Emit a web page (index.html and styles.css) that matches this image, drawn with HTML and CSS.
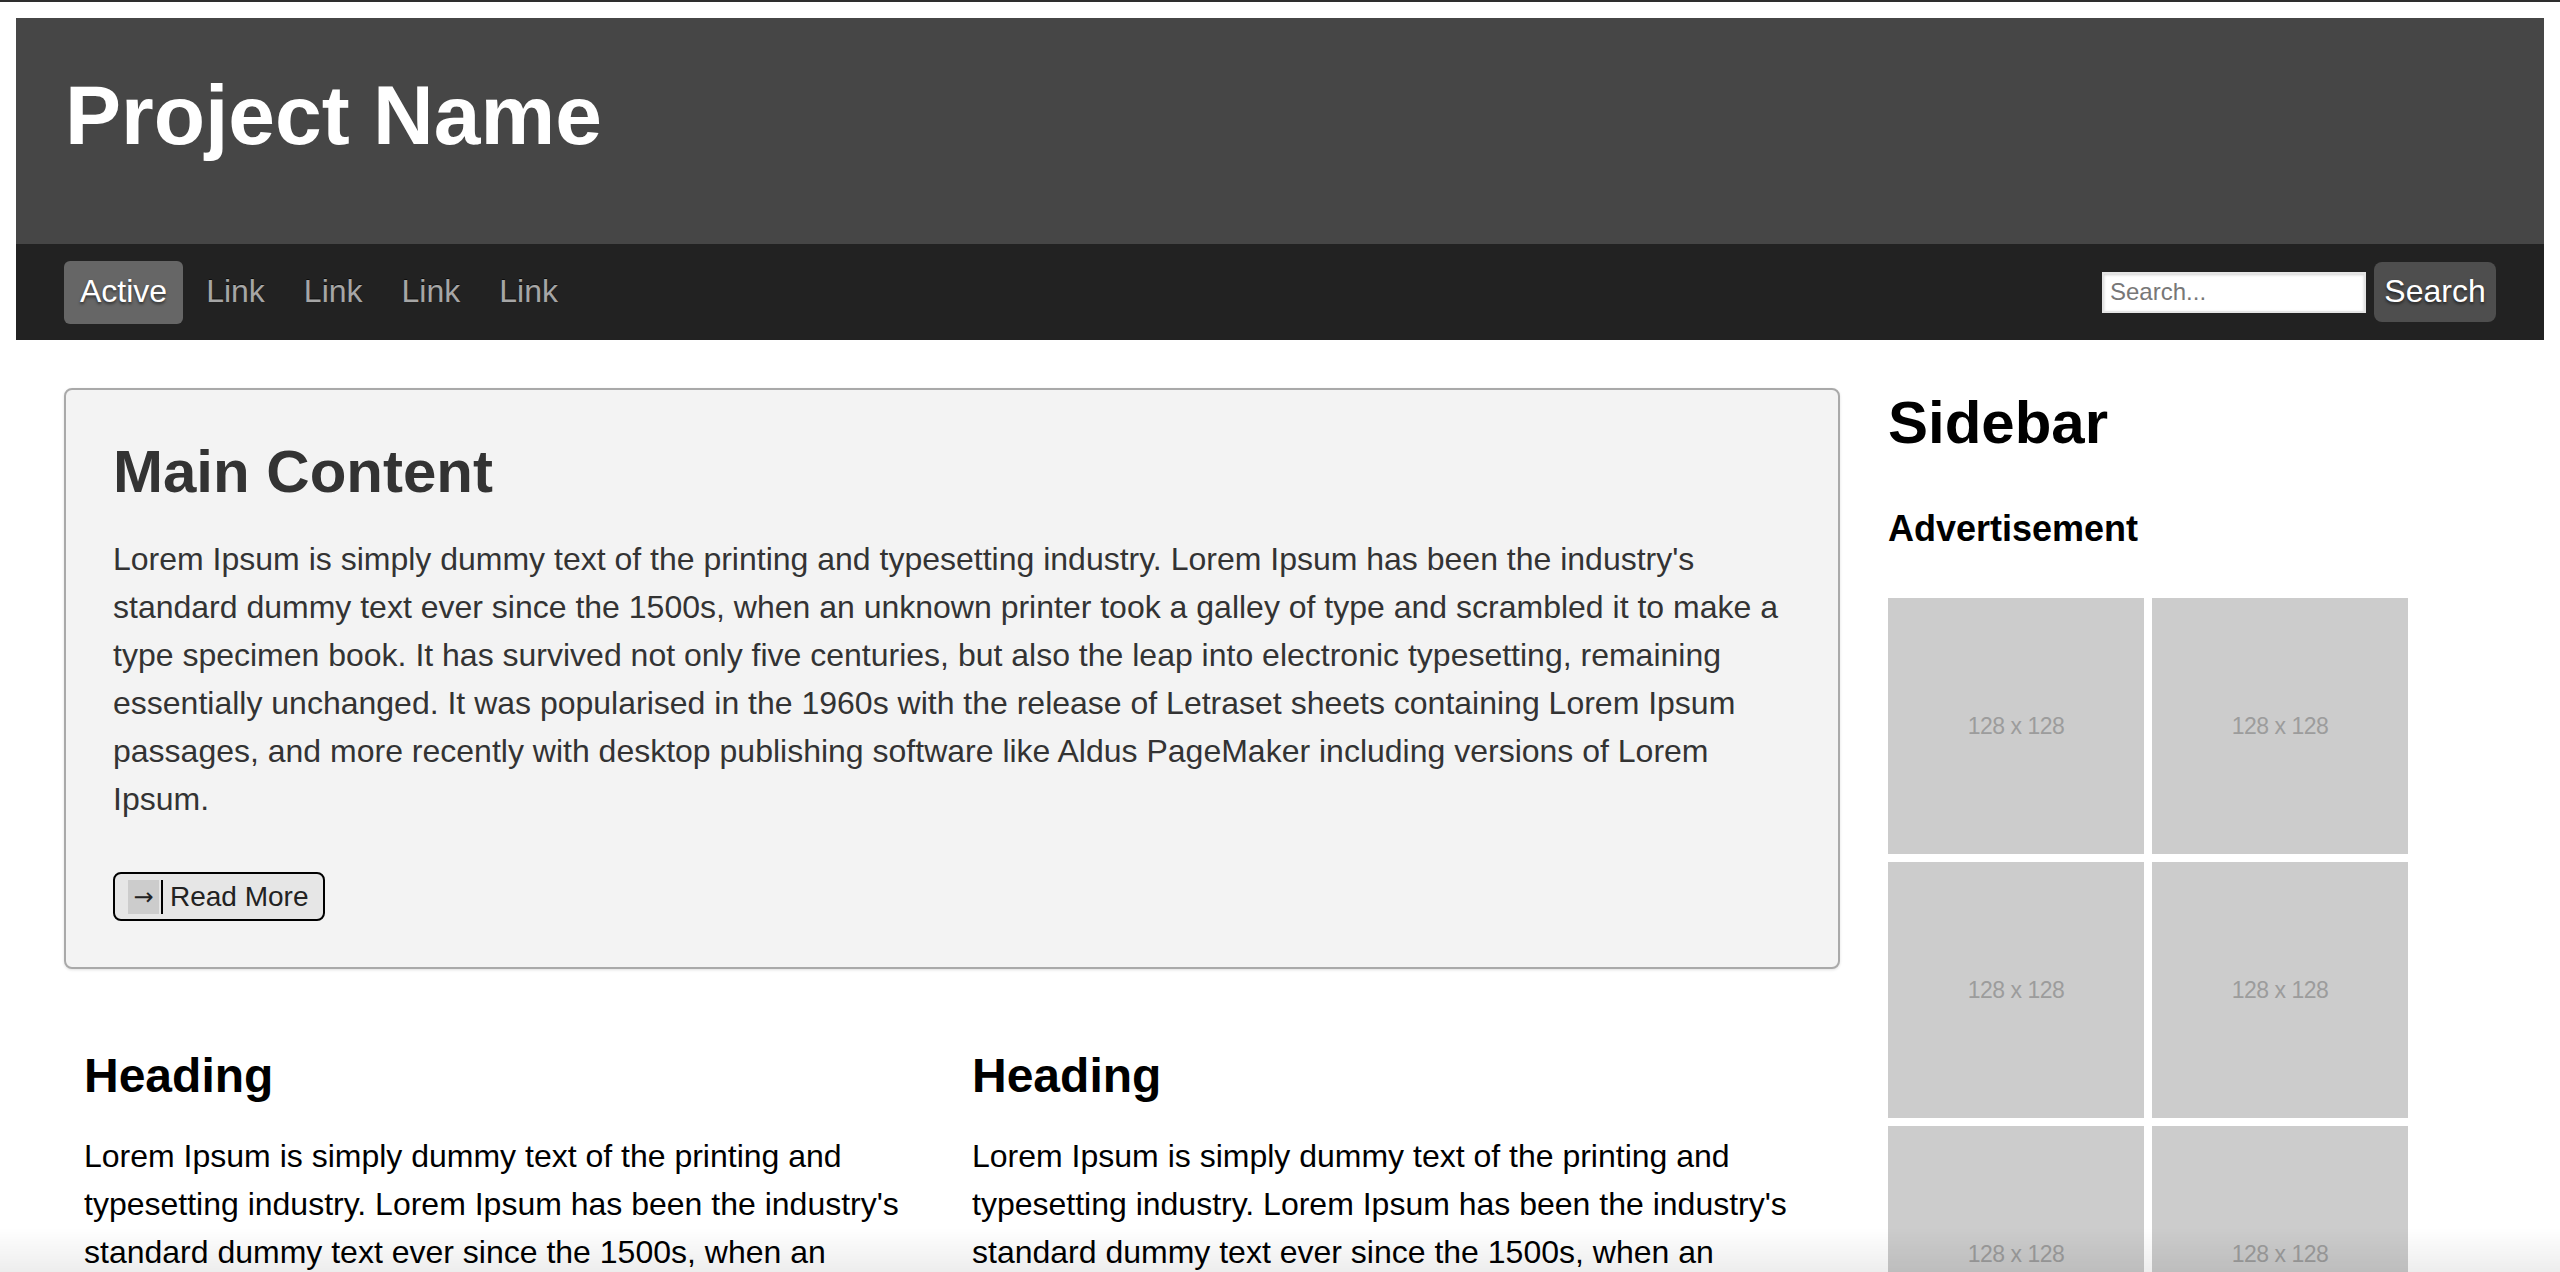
FILE: index.html
```html
<!DOCTYPE html>
<html lang="en">
<head>
<meta charset="utf-8">
<title>Project Name</title>
<link rel="stylesheet" href="styles.css">
</head>
<body>
<div class="topline"></div>
<div class="page">
  <header class="masthead">
    <h1 class="brand">Project Name</h1>
  </header>
  <nav class="navbar">
    <ul class="nav-links">
      <li><a class="nav-link active" href="#">Active</a></li>
      <li><a class="nav-link" href="#">Link</a></li>
      <li><a class="nav-link" href="#">Link</a></li>
      <li><a class="nav-link" href="#">Link</a></li>
      <li><a class="nav-link" href="#">Link</a></li>
    </ul>
    <form class="search">
      <input class="search-input" type="text" placeholder="Search...">
      <button class="search-btn" type="button">Search</button>
    </form>
  </nav>

  <div class="layout">
    <main class="main">
      <section class="card">
        <h2 class="card-title">Main Content</h2>
        <p class="card-text">Lorem Ipsum is simply dummy text of the printing and typesetting industry. Lorem Ipsum has been the industry's standard dummy text ever since the 1500s, when an unknown printer took a galley of type and scrambled it to make a type specimen book. It has survived not only five centuries, but also the leap into electronic typesetting, remaining essentially unchanged. It was popularised in the 1960s with the release of Letraset sheets containing Lorem Ipsum passages, and more recently with desktop publishing software like Aldus PageMaker including versions of Lorem Ipsum.</p>
        <button class="read-more" type="button"><span class="arrow">→</span><span class="caret"></span><span class="rm-label">Read More</span></button>
      </section>

      <div class="columns">
        <article class="col">
          <h3 class="col-title">Heading</h3>
          <p class="col-text">Lorem Ipsum is simply dummy text of the printing and typesetting industry. Lorem Ipsum has been the industry's standard dummy text ever since the 1500s, when an unknown printer took a galley of type and scrambled it to make a type specimen book.</p>
        </article>
        <article class="col">
          <h3 class="col-title">Heading</h3>
          <p class="col-text">Lorem Ipsum is simply dummy text of the printing and typesetting industry. Lorem Ipsum has been the industry's standard dummy text ever since the 1500s, when an unknown printer took a galley of type and scrambled it to make a type specimen book.</p>
        </article>
      </div>
    </main>

    <aside class="sidebar">
      <h2 class="side-title">Sidebar</h2>
      <h4 class="side-sub">Advertisement</h4>
      <div class="ads">
        <div class="ad">128 x 128</div>
        <div class="ad">128 x 128</div>
        <div class="ad">128 x 128</div>
        <div class="ad">128 x 128</div>
        <div class="ad">128 x 128</div>
        <div class="ad">128 x 128</div>
        <div class="ad">128 x 128</div>
        <div class="ad">128 x 128</div>
      </div>
    </aside>
  </div>
</div>
<div class="bottom-shade"></div>
</body>
</html>
```

FILE: styles.css
```css
* { box-sizing: border-box; }

html, body {
  margin: 0;
  padding: 0;
  background: #ffffff;
}

body {
  font-family: "Liberation Sans", Arial, Helvetica, sans-serif;
  color: #000;
}

.topline {
  height: 2px;
  background: #2e2e2e;
}

.page {
  padding: 16px 16px 0 16px;
}

/* Header */
.masthead {
  background: #464646;
  padding: 49px 48px 80px 49px;
}

.brand {
  margin: 0;
  font-size: 84px;
  line-height: 97px;
  font-weight: bold;
  color: #ffffff;
}

/* Nav bar */
.navbar {
  background: #222222;
  padding: 16px 48px;
  display: flex;
  align-items: center;
  justify-content: space-between;
  height: 96px;
}

.nav-links {
  list-style: none;
  margin: 0;
  padding: 0;
  display: flex;
  gap: 7px;
}

.nav-link {
  display: block;
  padding: 11px 16px 13px 16px;
  font-size: 32px;
  line-height: 39px;
  color: #a6a6a6;
  text-decoration: none;
  text-shadow: 0 -1px 0 rgba(0, 0, 0, 0.6);
  border-radius: 6px;
}

.nav-link.active {
  background: #666666;
  color: #ffffff;
  text-shadow: 0 2px 3px rgba(0, 0, 0, 0.55);
}

.search {
  display: flex;
  align-items: center;
  gap: 8px;
  margin: 0;
}

.search-input {
  width: 264px;
  height: 41px;
  border: 2px solid #e4e4e4;
  background: #ffffff;
  box-shadow: inset 0 1px 3px rgba(0, 0, 0, 0.18);
  padding: 0 6px;
  font-family: "Liberation Sans", Arial, sans-serif;
  font-size: 24px;
  color: #333;
  outline: none;
}

.search-input::placeholder {
  color: #777777;
}

.search-btn {
  width: 122px;
  height: 60px;
  border: none;
  border-radius: 8px;
  background: #4e4e4e;
  color: #ffffff;
  font-family: "Liberation Sans", Arial, sans-serif;
  font-size: 32px;
  padding: 0 0 2px 0;
  text-shadow: 0 2px 3px rgba(0, 0, 0, 0.55);
}

/* Layout */
.layout {
  display: grid;
  grid-template-columns: 3fr 1fr;
  padding: 48px 48px 0 48px;
}

.main {
  padding-right: 48px;
}

.card {
  background: #f3f3f3;
  border: 2px solid #a9a9a9;
  border-radius: 8px;
  box-shadow: 0 1px 3px rgba(0, 0, 0, 0.12);
  padding: 47px 48px 46px 47px;
}

.card-title {
  margin: 0 0 29px 0;
  font-size: 60px;
  line-height: normal;
  font-weight: bold;
  color: #333333;
}

.card-text {
  margin: 0 0 49px 0;
  font-size: 32px;
  line-height: 48px;
  color: #333333;
}

.read-more {
  display: flex;
  align-items: center;
  height: 49px;
  padding: 0 14px 0 13px;
  border: 2px solid #000000;
  border-radius: 8px;
  background: #e6e6e6;
  font-family: "Liberation Sans", Arial, sans-serif;
  color: #222222;
  cursor: pointer;
}

.arrow {
  display: flex;
  align-items: center;
  justify-content: center;
  width: 31px;
  height: 34px;
  background: #cccccc;
  font-family: "DejaVu Sans", sans-serif;
  font-size: 24px;
  color: #222;
}

.caret {
  display: block;
  width: 2px;
  height: 34px;
  background: #000;
  margin-left: 2px;
}

.rm-label {
  margin-left: 7px;
  font-size: 28px;
  line-height: 34px;
}

.columns {
  display: grid;
  grid-template-columns: 1fr 1fr;
  margin-top: 79px;
}

.col {
  padding: 0 20px;
}

.col-title {
  margin: 0 0 29px 0;
  font-size: 48px;
  line-height: normal;
  font-weight: bold;
}

.col-text {
  margin: 0;
  font-size: 32px;
  line-height: 48px;
}

/* Sidebar */
.sidebar {
  padding-top: 0;
}

.side-title {
  margin: 0;
  font-size: 60px;
  line-height: normal;
  font-weight: bold;
}

.side-sub {
  margin: 51px 0 48px 0;
  font-size: 36px;
  line-height: normal;
  font-weight: bold;
}

.ads {
  display: grid;
  grid-template-columns: 256px 256px;
  gap: 8px;
}

.ad {
  width: 256px;
  height: 256px;
  background: #cccccc;
  color: #9c9c9c;
  font-size: 23px;
  display: flex;
  align-items: center;
  justify-content: center;
  letter-spacing: -0.5px;
}

.bottom-shade {
  position: fixed;
  left: 0;
  right: 0;
  bottom: 0;
  height: 44px;
  background: linear-gradient(to bottom, rgba(0, 0, 0, 0), rgba(0, 0, 0, 0.07));
  pointer-events: none;
}
```
